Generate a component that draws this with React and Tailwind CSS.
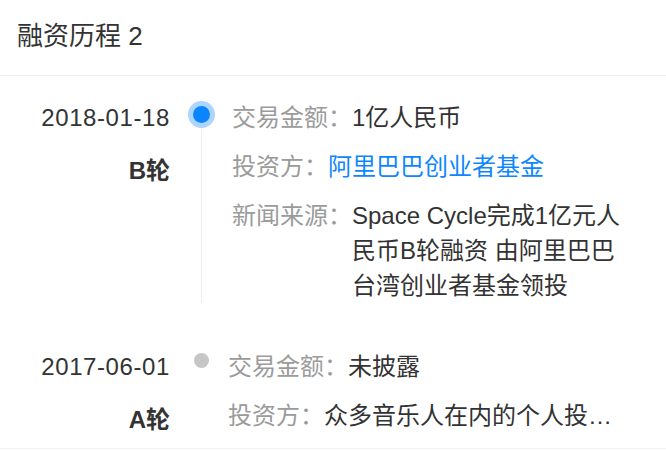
const rounds = [
  {
    date: "2018-01-18",
    stage: "B轮",
    active: true,
    rows: [
      { label: "交易金额：", value: "1亿人民币" },
      { label: "投资方：", value: "阿里巴巴创业者基金", link: true },
      { label: "新闻来源：", value: "Space Cycle完成1亿元人民币B轮融资 由阿里巴巴台湾创业者基金领投" },
    ],
  },
  {
    date: "2017-06-01",
    stage: "A轮",
    active: false,
    rows: [
      { label: "交易金额：", value: "未披露" },
      { label: "投资方：", value: "众多音乐人在内的个人投资者", truncate: true },
    ],
  },
];

export default function App() {
  return (
    <div className="w-[666px] h-[450px] bg-white text-[#333] font-['Liberation_Sans','Noto_Sans_CJK_SC',sans-serif]">
      <div className="h-[76px] flex items-center pl-[17px] pb-[2px] text-[26px] border-b border-[#eeeeee]">
        融资历程 2
      </div>

      <div className="pt-[24px] pb-[11px] border-b border-[#f2f2f2]">
        {rounds.map((r, i) => (
          <div key={i} className={`flex ${i === 0 ? "pb-[46px]" : ""}`}>
            {/* date + stage */}
            <div className="w-[170px] shrink-0 flex flex-col items-end text-[24px] leading-[35px]">
              <span className="tracking-[0.6px]">{r.date}</span>
              <span className="mt-[18px] font-bold">{r.stage}</span>
            </div>

            {/* timeline */}
            <div className="w-[62px] shrink-0 flex flex-col items-center">
              {r.active ? (
                <div className="mt-[6px] w-[17px] h-[17px] rounded-full bg-[#0a84ff] shadow-[0_0_0_5px_#acd5ff]" />
              ) : (
                <div className="mt-[4px] w-[15px] h-[15px] rounded-full bg-[#c6c6c6]" />
              )}
              {i === 0 && <div className="mt-[6px] w-px flex-1 bg-[#ededed]" />}
            </div>

            {/* details */}
            <div className={`flex-1 min-w-0 pr-[38px] flex flex-col gap-[14px] text-[24px] leading-[35px] ${i === 1 ? "-ml-[4px]" : ""}`}>
              {r.rows.map((row, j) => (
                <div key={j} className="flex">
                  <span className="shrink-0 text-[#9b9b9b]">{row.label}</span>
                  <span
                    className={`flex-1 min-w-0 ${row.link ? "text-[#0e86fe]" : "text-[#333]"} ${
                      row.truncate ? "truncate" : ""
                    }`}
                  >
                    {row.value}
                  </span>
                </div>
              ))}
            </div>
          </div>
        ))}
      </div>
    </div>
  );
}
